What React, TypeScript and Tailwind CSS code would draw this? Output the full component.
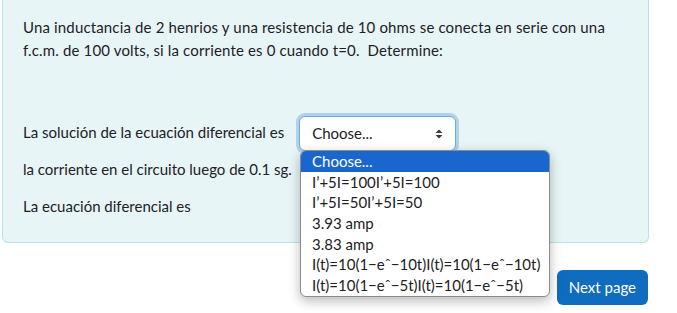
const options = [
  'Choose...',
  'I’+5I=100I’+5I=100',
  'I’+5I=50I’+5I=50',
  '3.93 amp',
  '3.83 amp',
  'I(t)=10(1−eˆ−10t)I(t)=10(1−eˆ−10t)',
  'I(t)=10(1−eˆ−5t)I(t)=10(1−eˆ−5t)',
];

function SortIcon() {
  return (
    <svg width="8" height="10" viewBox="0 0 8 10" className="text-[#343a40]">
      <path d="M4 0.5 L7.5 4 L0.5 4 Z" fill="currentColor" />
      <path d="M4 9.5 L7.5 6 L0.5 6 Z" fill="currentColor" />
    </svg>
  );
}

export default function App() {
  return (
    <div
      className="relative w-[677px] h-[313px] overflow-hidden bg-white text-[15px] text-[#1d2125]"
      style={{ fontFamily: 'Lato, "Open Sans", sans-serif' }}
    >
      <div className="ml-[2px] -mt-[4px] w-[647px] h-[247px] bg-[#e7f5f7] border border-t-0 border-[#b8e4ec] rounded-b-[6px] pl-[20px] pt-[20px]">
        <p className="leading-[23px] whitespace-nowrap tracking-[0.15px]">
          Una inductancia de 2 henrios y una resistencia de 10 ohms se conecta en serie con una
          <br />
          f.c.m. de 100 volts, si la corriente es 0 cuando t=0.&nbsp; Determine:
        </p>

        <div className="mt-[51px] flex items-center gap-[15px]">
          <span>La solución de la ecuación diferencial es</span>
          <div className="mt-[3px] w-[157px] h-[35px] bg-white border border-[#6ea8e6] rounded-[6px] shadow-[0_0_0_3px_rgba(15,108,191,0.25)] flex items-center justify-between pl-[12px] pr-[12px]">
            <span>Choose...</span>
            <SortIcon />
          </div>
        </div>

        <div className="mt-[1px] leading-[34px]">la corriente en el circuito luego de 0.1 sg.</div>
        <div className="mt-[3px] leading-[34px]">La ecuación diferencial es</div>
      </div>

      <div className="flex justify-end pr-[29px] pt-[27px]">
        <button className="h-[35px] px-[12px] bg-[#0f6cbf] text-white rounded-[6px] text-[15px]">
          Next page
        </button>
      </div>

      <div className="absolute left-[300px] top-[150px] w-[250px] bg-white border border-[#8c8c8c] rounded-[6px] shadow-[0_4px_12px_rgba(0,0,0,0.28)] overflow-hidden">
        {options.map((o, i) => (
          <div
            key={o}
            className={`h-[20.7px] leading-[20.7px] pl-[11px] whitespace-nowrap ${i === 0 ? 'bg-[#1a66cf] text-white' : 'text-[#1d2125]'}`}
          >
            {o}
          </div>
        ))}
      </div>
    </div>
  );
}
